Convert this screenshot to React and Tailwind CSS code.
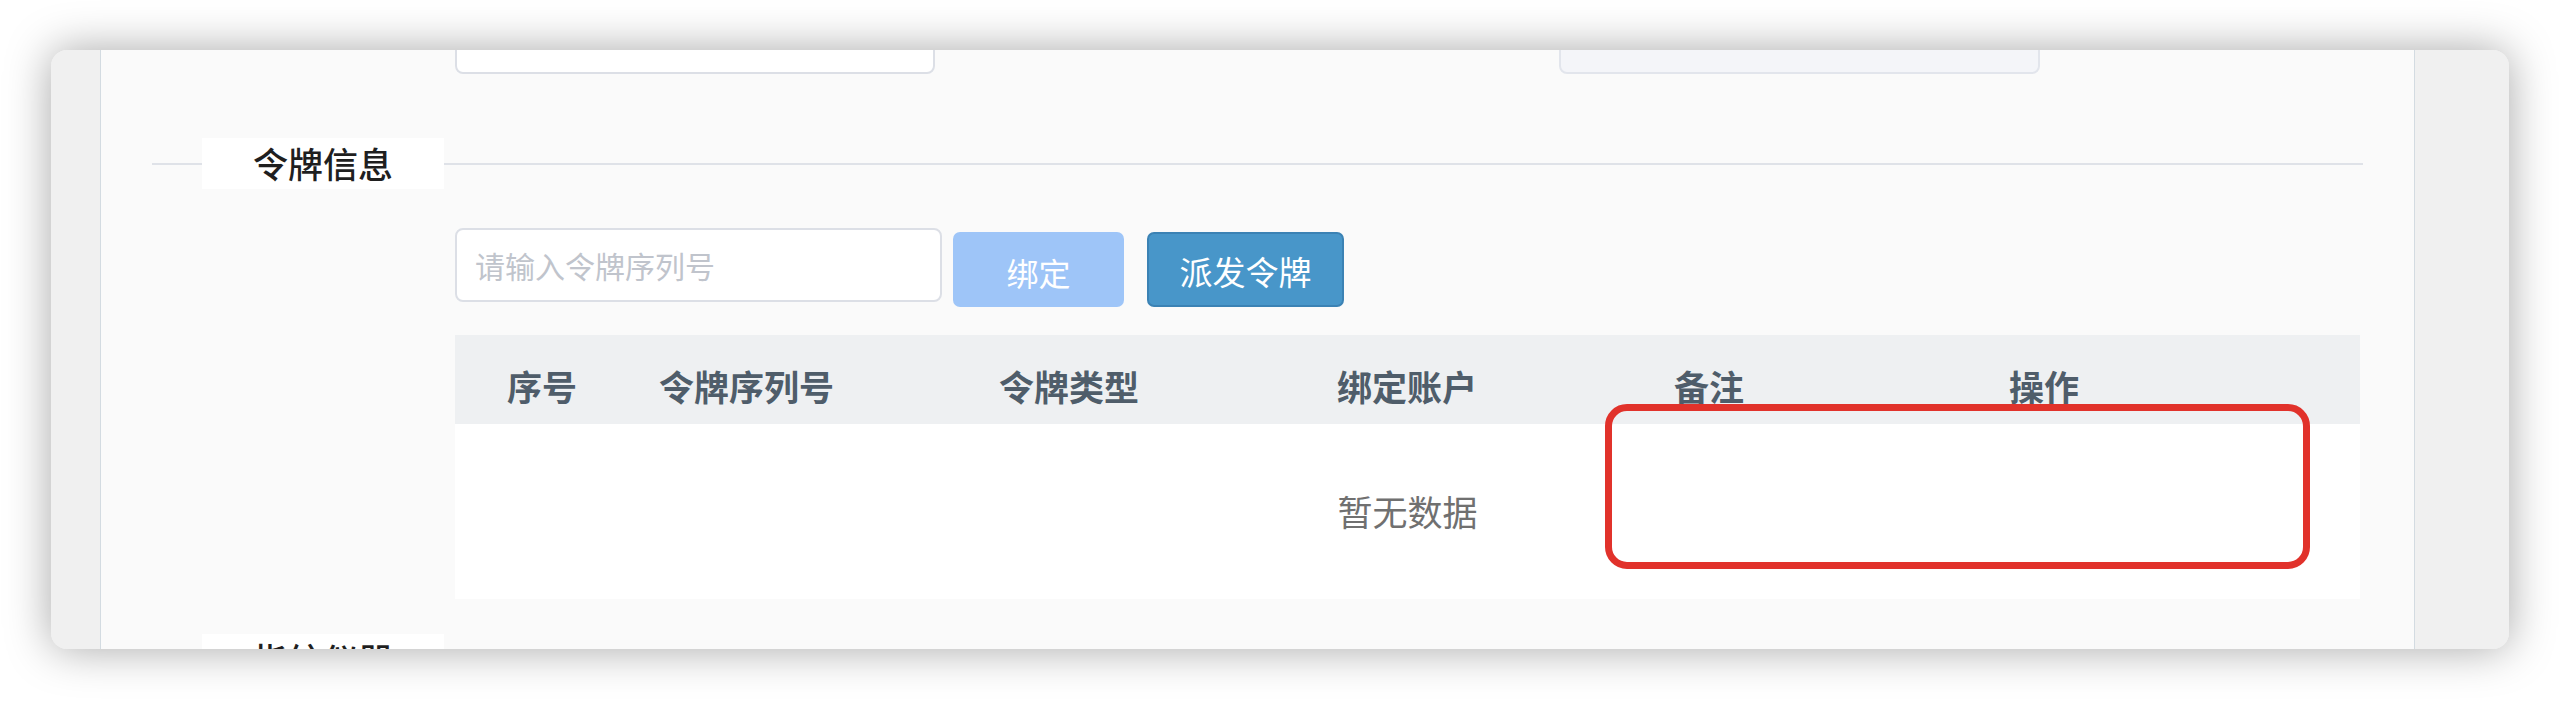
import React from 'react';

const COLUMNS = ['序号', '令牌序列号', '令牌类型', '绑定账户', '备注', '操作'];

function SectionTitle({ title }) {
  return (
    <div className="flex h-[51px] items-center px-[51px]">
      <div className="h-[2px] w-[50px] bg-[#dfe2e8]" />
      <div className="flex h-full w-[242px] items-center justify-center bg-white text-[35px] font-medium text-[#1f1f1f]">
        {title}
      </div>
      <div className="h-[2px] flex-1 bg-[#dfe2e8]" />
    </div>
  );
}

export default function App() {
  return (
    <div className="min-h-screen w-full bg-white px-[51px] pt-[50px] pb-[52px] font-['Noto_Sans_CJK_SC','Noto_Sans',sans-serif]">
      {/* Window */}
      <div className="flex h-[599px] overflow-hidden rounded-[16px] bg-[#f0f0f0] shadow-[0_0_45px_rgba(0,0,0,0.35)]">
        <div className="w-[50px] flex-none border-r border-[#d3dbe1] bg-[#f0f0f0]" />

        {/* Scrolled form area */}
        <div className="min-w-0 flex-1 overflow-hidden bg-[#fafafa]">
          <div className="-mt-[51px] flex flex-col">
            {/* Row cut off by the top edge */}
            <div className="flex h-[75px] items-center">
              <div className="w-[354px] flex-none pb-[14px] pr-[66px] text-right text-[32px] text-[#333]">姓名:</div>
              <div className="h-[75px] w-[480px] flex-none rounded-[8px] border-2 border-[#dcdfe6] bg-white" />
              <div className="w-[624px] flex-none pb-[14px] pr-[47px] text-right text-[32px] text-[#333]">状态:</div>
              <div className="flex h-[75px] w-[481px] flex-none items-center rounded-[8px] border-2 border-[#e2e5ec] bg-[#f4f5f9] pb-[14px] pl-[25px] text-[30px] text-[#c0c4cc]">
                未设置
              </div>
            </div>

            <div className="mt-[64px]">
              <SectionTitle title="令牌信息" />
            </div>

            {/* Bind input + buttons */}
            <div className="mt-[39px] flex items-start pl-[354px]">
              <input
                type="text"
                placeholder="请输入令牌序列号"
                className="h-[74px] w-[487px] rounded-[8px] border-2 border-[#dcdfe6] bg-white pl-[18px] text-[30px] text-[#333] outline-none placeholder:text-[#c0c4cc]"
              />
              <button className="ml-[11px] mt-[4px] flex h-[75px] w-[171px] items-center justify-center rounded-[7px] bg-[#9ec5f8] pt-[4px] text-[32px] text-white">
                绑定
              </button>
              <button className="ml-[23px] mt-[4px] flex h-[75px] w-[197px] items-center justify-center rounded-[7px] border-2 border-[#3b82b4] bg-[#4896c9] pt-[4px] text-[33px] text-white">
                派发令牌
              </button>
            </div>

            {/* Token table */}
            <div className="relative mt-[28px] ml-[354px] w-[1905px]">
              <div className="grid h-[89px] grid-cols-[152px_340px_338px_337px_335px_1fr] items-center bg-[#eef0f2] pl-[52px] pt-[14px] text-[35px] font-semibold text-[#4f5d6a]">
                {COLUMNS.map(c => (
                  <div key={c}>{c}</div>
                ))}
              </div>
              <div className="flex h-[175px] items-center justify-center bg-white text-[35px] text-[#707070]">
                暂无数据
              </div>

              {/* Annotation */}
              <div className="absolute left-[1150px] top-[69px] h-[165px] w-[705px] rounded-[22px] border-[7px] border-[#e1322b]" />
            </div>

            <div className="mt-[35px] ml-[101px] flex h-[51px] w-[242px] items-center justify-center bg-white text-[35px] font-medium text-[#1f1f1f]">
              指纹仪器
            </div>
          </div>
        </div>

        <div className="w-[95px] flex-none border-l border-[#d3dbe1] bg-[#f0f0f0]" />
      </div>
    </div>
  );
}
